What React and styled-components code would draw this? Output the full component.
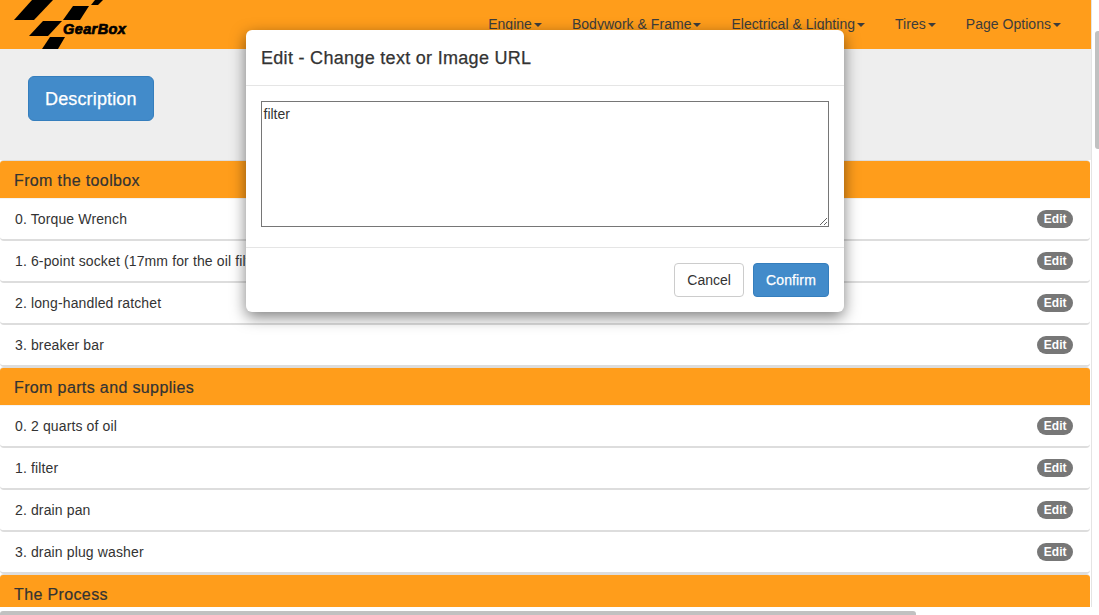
import React from 'react';
import styled, { createGlobalStyle } from 'styled-components';

const GlobalStyle = createGlobalStyle`
  html, body {
    margin: 0;
    height: 100%;
    overflow: hidden;
    background: #fff;
  }
  body {
    font-family: "Liberation Sans", Arial, sans-serif;
    font-size: 14px;
    line-height: 20px;
    color: #333;
  }
  * {
    box-sizing: border-box;
  }
`;

const Viewport = styled.div`
  position: relative;
  width: 1099px;
  height: 615px;
  overflow: hidden;
  background: #fff;
`;

const Page = styled.div`
  width: 1092px;
  height: 607px;
  overflow: hidden;
  border-right: 1px solid #e4e4e4;
`;

const NavBar = styled.nav`
  display: flex;
  justify-content: space-between;
  height: 49px;
  background: #ff9d1b;
`;

const Logo = styled.svg`
  display: block;
  width: 140px;
  height: 49px;
`;

const LogoText = styled.text`
  font-family: "Liberation Sans", Arial, sans-serif;
  font-size: 14.5px;
  font-weight: bold;
  font-style: italic;
  letter-spacing: 0.4px;
  stroke: #000;
  stroke-width: 0.7px;
`;

const NavList = styled.ul`
  display: flex;
  margin: 0;
  padding: 0 15px 0 0;
  list-style: none;
`;

const NavItem = styled.li`
  padding: 14px 15px 15px;
  color: #3c3c3c;
  letter-spacing: 0.03px;
  white-space: nowrap;
`;

const Caret = styled.span`
  display: inline-block;
  margin-left: 2px;
  vertical-align: middle;
  border-top: 4px solid #3c3c3c;
  border-left: 4px solid transparent;
  border-right: 4px solid transparent;
`;

const Jumbotron = styled.div`
  height: 111px;
  padding: 27px 28px;
  background: #eee;
`;

const Button = styled.button`
  height: ${p => (p.$large ? '45px' : '34px')};
  padding: ${p => (p.$large ? '1px 16px 0' : '0 12px')};
  border: 1px solid ${p => (p.$primary ? '#357ebd' : '#ccc')};
  border-radius: ${p => (p.$large ? '6px' : '4px')};
  background: ${p => (p.$primary ? '#428bca' : '#fff')};
  color: ${p => (p.$primary ? '#fff' : '#333')};
  font-family: inherit;
  font-size: ${p => (p.$large ? '18px' : '14px')};
  letter-spacing: ${p => (p.$primary ? '0.15px' : '0')};
  -webkit-text-stroke: ${p => (p.$primary ? '0.25px #fff' : '0')};
`;

const Section = styled.section`
  margin-right: 1px;
  border-top: 1px solid #ddd;
  border-radius: 4px 4px 0 0;
`;

const SectionHeading = styled.h3`
  height: 38px;
  margin: 0;
  padding: 10px 14px 0;
  border-bottom: 1px solid #f4f4f4;
  border-radius: 3px 3px 0 0;
  background: #ff9d1b;
  color: #333;
  font-size: 16px;
  font-weight: normal;
  line-height: 20px;
  letter-spacing: 0.37px;
  -webkit-text-stroke: 0.2px #333;
`;

const Row = styled.div`
  display: flex;
  align-items: center;
  justify-content: space-between;
  height: 42px;
  padding: 0 17px 0 15px;
  border-bottom: 2px solid #ddd;
  border-radius: 4px;
  background: #fff;
  letter-spacing: 0.13px;
`;

const Badge = styled.span`
  height: 18px;
  padding: 0 6.5px;
  border-radius: 10px;
  background: #777;
  color: #fff;
  font-size: 12px;
  font-weight: bold;
  line-height: 18px;
  letter-spacing: 0;
`;

const Modal = styled.div`
  position: absolute;
  top: 30px;
  left: 246px;
  width: 598px;
  height: 282px;
  border-radius: 6px;
  background: #fff;
  box-shadow: 0 5px 15px rgba(0, 0, 0, 0.5);
`;

const ModalHeader = styled.div`
  height: 56px;
  padding: 18px 15px 0;
  border-bottom: 1px solid #e5e5e5;
`;

const ModalTitle = styled.h4`
  margin: 0;
  color: #333;
  font-size: 18px;
  font-weight: normal;
  line-height: 20px;
  letter-spacing: 0.3px;
  -webkit-text-stroke: 0.25px #333;
`;

const ModalBody = styled.div`
  height: 162px;
  padding: 15px;
  border-bottom: 1px solid #e5e5e5;
`;

const TextBox = styled.textarea`
  display: block;
  width: 568px;
  height: 126px;
  padding: 2px 1.5px;
  border: 1px solid #767676;
  background: #fff;
  color: #333;
  font-family: inherit;
  font-size: 14px;
  line-height: 20px;
`;

const ModalFooter = styled.div`
  display: flex;
  justify-content: flex-end;
  gap: 9px;
  padding: 15px;
`;

const VerticalThumb = styled.div`
  position: absolute;
  top: 31px;
  right: 0;
  width: 4px;
  height: 118px;
  border-radius: 3px 0 0 3px;
  background: #c1c1c1;
`;

const HorizontalThumb = styled.div`
  position: absolute;
  left: 0;
  bottom: 0;
  width: 916px;
  height: 4px;
  border-radius: 3px 3px 0 0;
  background: #c1c1c1;
`;

const navLinks = ['Engine', 'Bodywork & Frame', 'Electrical & Lighting', 'Tires', 'Page Options'];

const sections = [
  {
    title: 'From the toolbox',
    rows: ['0. Torque Wrench', '1. 6-point socket (17mm for the oil filter)', '2. long-handled ratchet', '3. breaker bar'],
  },
  {
    title: 'From parts and supplies',
    rows: ['0. 2 quarts of oil', '1. filter', '2. drain pan', '3. drain plug washer'],
  },
  { title: 'The Process', rows: [] },
];

function GearBoxLogo() {
  return (
    <Logo viewBox="0 0 140 49">
      <polygon points="14,20 34,20 53,0 32,0" />
      <polygon points="63,20 80,20 89,6 73,6" />
      <polygon points="91,5 98,5 103,0 95,0" />
      <polygon points="29,36 48,36 62,21 43,21" />
      <polygon points="42,49 58,49 65,37 50,37" />
      <LogoText x="63" y="34">GearBox</LogoText>
    </Logo>
  );
}

export default function App() {
  return (
    <Viewport>
      <GlobalStyle />
      <Page>
        <NavBar>
          <GearBoxLogo />
          <NavList>
            {navLinks.map(link => (
              <NavItem key={link}>{link}<Caret /></NavItem>
            ))}
          </NavList>
        </NavBar>
        <Jumbotron>
          <Button $primary $large>Description</Button>
        </Jumbotron>
        {sections.map(section => (
          <Section key={section.title}>
            <SectionHeading>{section.title}</SectionHeading>
            {section.rows.map(row => (
              <Row key={row}>
                {row}
                <Badge>Edit</Badge>
              </Row>
            ))}
          </Section>
        ))}
      </Page>
      <VerticalThumb />
      <HorizontalThumb />
      <Modal>
        <ModalHeader>
          <ModalTitle>Edit - Change text or Image URL</ModalTitle>
        </ModalHeader>
        <ModalBody>
          <TextBox defaultValue="filter" />
        </ModalBody>
        <ModalFooter>
          <Button>Cancel</Button>
          <Button $primary>Confirm</Button>
        </ModalFooter>
      </Modal>
    </Viewport>
  );
}
